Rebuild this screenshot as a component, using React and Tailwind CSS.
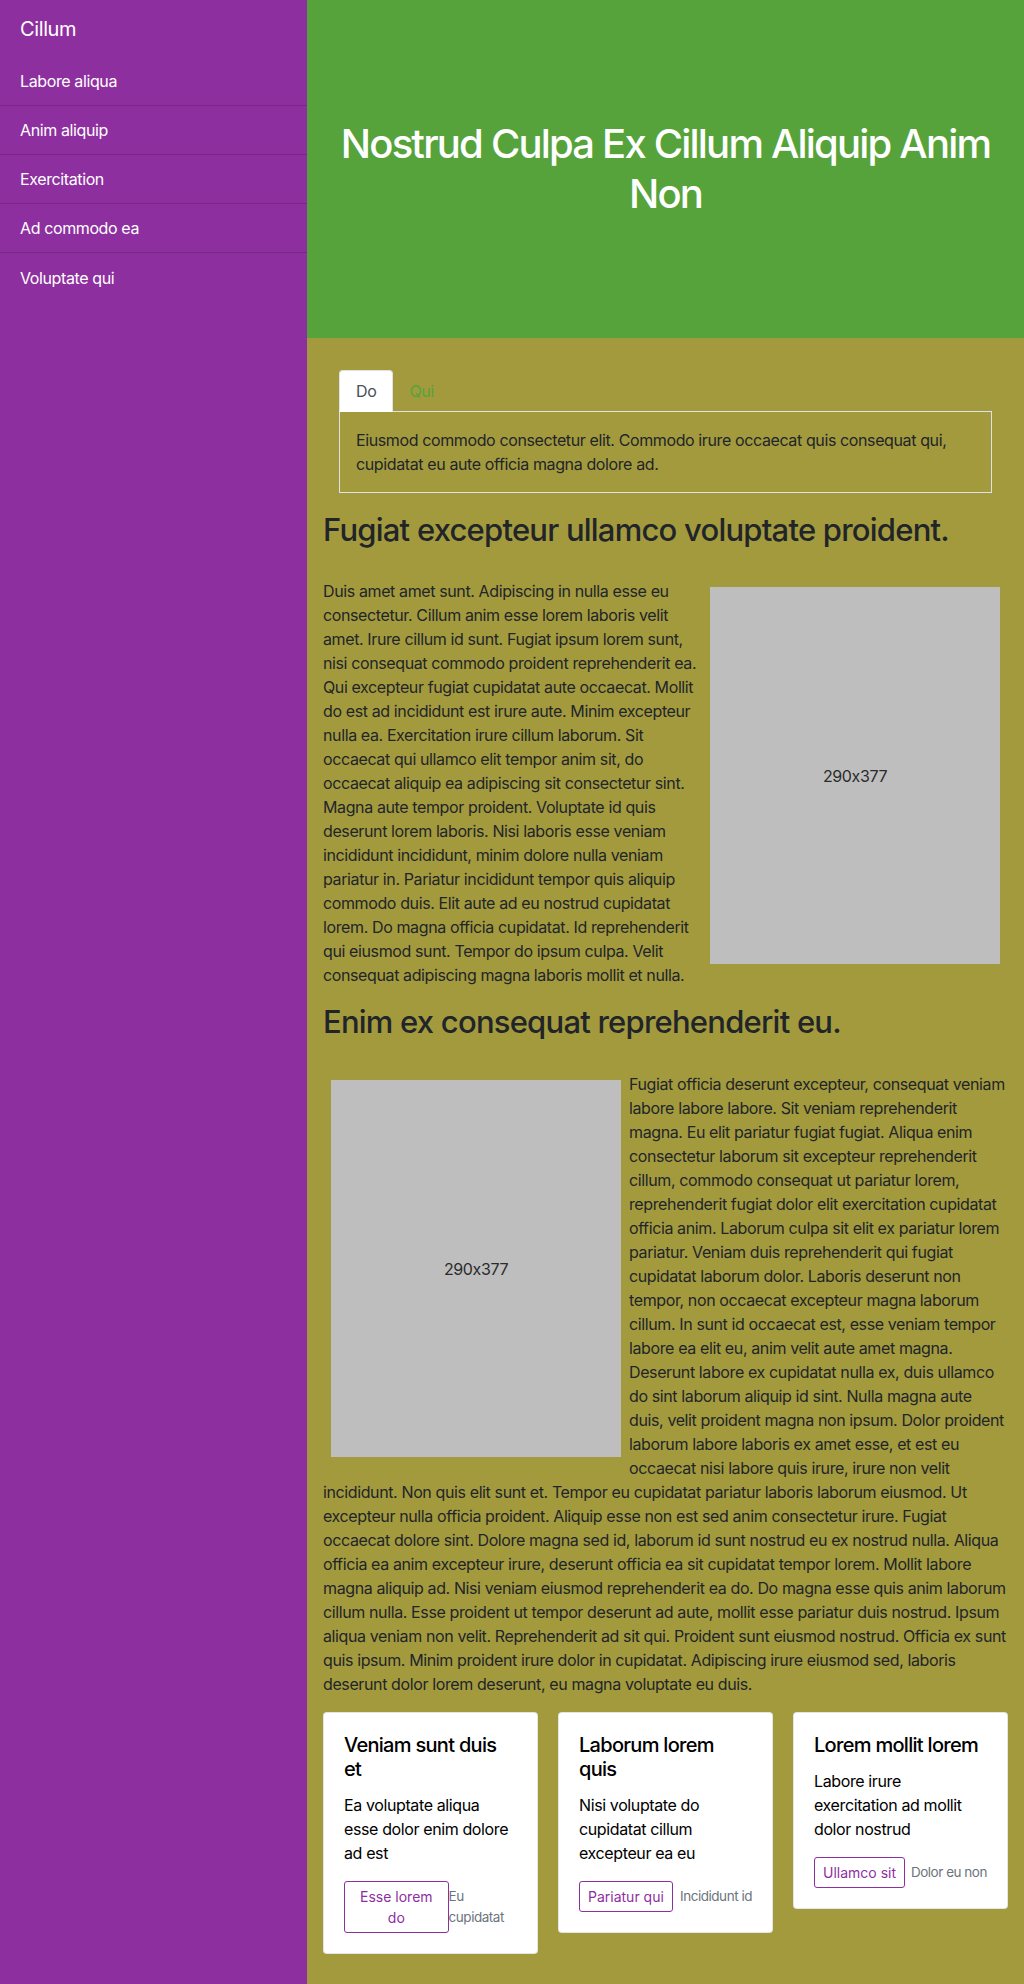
import React from "react";

const navItems = ["Labore aliqua", "Anim aliquip", "Exercitation", "Ad commodo ea", "Voluptate qui"];

const Placeholder = ({ side }) => (
    <div
        className={
            "w-[290px] h-[377px] m-2 bg-[#bebebe] flex items-center justify-center text-[16px] text-[#2b2b2b] " +
            (side === "right" ? "float-right" : "float-left")
        }
    >
        290x377
    </div>
);

const Card = ({ title, text, action, note }) => (
    <div className="flex-1 bg-white border border-black/10 rounded-[4px] p-5 text-black">
        <h5 className="text-[20px] leading-[24px] font-medium tracking-[-0.035em] mb-3">{title}</h5>
        <p className="text-[16px] leading-[24px] mb-4">{text}</p>
        <div className="flex items-center justify-between">
            <button className="border border-[#8e2f9f] text-[#8e2f9f] text-[14px] leading-[21px] px-2 py-1 rounded-[3px] tracking-normal">
                {action}
            </button>
            <small className="text-[13.5px] leading-[21px] text-[#6c757d] tracking-[-0.035em]">{note}</small>
        </div>
    </div>
);

export default function App() {
    return (
        <div className="flex min-h-screen font-['Inter',sans-serif] tracking-[-0.024em]">
            {/* Sidebar */}
            <aside className="w-[307px] shrink-0 bg-[#8e2f9f] text-white">
                <div className="h-[57px] px-5 flex items-center text-[20px]">Cillum</div>
                <nav>
                    {navItems.map((item, i) => (
                        <div
                            key={item}
                            className={
                                "h-[49px] px-5 flex items-center text-[16px] " +
                                (i < navItems.length - 1 ? "border-b border-black/15" : "")
                            }
                        >
                            {item}
                        </div>
                    ))}
                </nav>
            </aside>

            {/* Main */}
            <main className="flex-1 bg-[#a39a3e]">
                <header className="h-[338px] bg-[#56a33b] flex items-center justify-center px-4">
                    <h1 className="text-[40px] leading-[50px] font-medium text-white text-center tracking-[-0.045em]">
                        Nostrud Culpa Ex Cillum Aliquip Anim Non
                    </h1>
                </header>

                <div className="p-4 text-[#212529] text-[16px] leading-[24px]">
                    {/* Tabs */}
                    <div className="p-4">
                        <div className="flex border-b border-[#dee2e6]">
                            <button className="px-4 py-2 bg-white text-[#495057] border border-[#dee2e6] border-b-white rounded-t-[4px] -mb-px">
                                Do
                            </button>
                            <button className="px-4 py-2 text-[#56a33b]">Qui</button>
                        </div>
                        <div className="border border-t-0 border-[#dee2e6] p-4">
                            Eiusmod commodo consectetur elit. Commodo irure occaecat quis consequat qui, cupidatat eu aute officia magna dolore ad.
                        </div>
                    </div>

                    <h2 className="text-[31px] leading-[38px] font-medium tracking-[-0.025em] mt-0.5 mb-[30px]">
                        Fugiat excepteur ullamco voluptate proident.
                    </h2>
                    <div className="flow-root">
                        <Placeholder side="right" />
                        <p className="mb-4">
                            Duis amet amet sunt. Adipiscing in nulla esse eu consectetur. Cillum anim esse lorem laboris velit amet. Irure cillum id sunt. Fugiat ipsum lorem sunt, nisi consequat commodo proident reprehenderit ea. Qui excepteur fugiat cupidatat aute occaecat. Mollit do est ad incididunt est irure aute. Minim excepteur nulla ea. Exercitation irure cillum laborum. Sit occaecat qui ullamco elit tempor anim sit, do occaecat aliquip ea adipiscing sit consectetur sint. Magna aute tempor proident. Voluptate id quis deserunt lorem laboris. Nisi laboris esse veniam incididunt incididunt, minim dolore nulla veniam pariatur in. Pariatur incididunt tempor quis aliquip commodo duis. Elit aute ad eu nostrud cupidatat lorem. Do magna officia cupidatat. Id reprehenderit qui eiusmod sunt. Tempor do ipsum culpa. Velit consequat adipiscing magna laboris mollit et nulla.
                        </p>
                    </div>

                    <h2 className="text-[31px] leading-[38px] font-medium tracking-[-0.025em] mb-[31px]">
                        Enim ex consequat reprehenderit eu.
                    </h2>
                    <div className="flow-root">
                        <Placeholder side="left" />
                        <p className="mb-4">
                            Fugiat officia deserunt excepteur, consequat veniam labore labore labore. Sit veniam reprehenderit magna. Eu elit pariatur fugiat fugiat. Aliqua enim consectetur laborum sit excepteur reprehenderit cillum, commodo consequat ut pariatur lorem, reprehenderit fugiat dolor elit exercitation cupidatat officia anim. Laborum culpa sit elit ex pariatur lorem pariatur. Veniam duis reprehenderit qui fugiat cupidatat laborum dolor. Laboris deserunt non tempor, non occaecat excepteur magna laborum cillum. In sunt id occaecat est, esse veniam tempor labore ea elit eu, anim velit aute amet magna. Deserunt labore ex cupidatat nulla ex, duis ullamco do sint laborum aliquip id sint. Nulla magna aute duis, velit proident magna non ipsum. Dolor proident laborum labore laboris ex amet esse, et est eu occaecat nisi labore quis irure, irure non velit incididunt. Non quis elit sunt et. Tempor eu cupidatat pariatur laboris laborum eiusmod. Ut excepteur nulla officia proident. Aliquip esse non est sed anim consectetur irure. Fugiat occaecat dolore sint. Dolore magna sed id, laborum id sunt nostrud eu ex nostrud nulla. Aliqua officia ea anim excepteur irure, deserunt officia ea sit cupidatat tempor lorem. Mollit labore magna aliquip ad. Nisi veniam eiusmod reprehenderit ea do. Do magna esse quis anim laborum cillum nulla. Esse proident ut tempor deserunt ad aute, mollit esse pariatur duis nostrud. Ipsum aliqua veniam non velit. Reprehenderit ad sit qui. Proident sunt eiusmod nostrud. Officia ex sunt quis ipsum. Minim proident irure dolor in cupidatat. Adipiscing irure eiusmod sed, laboris deserunt dolor lorem deserunt, eu magna voluptate eu duis.
                        </p>
                    </div>

                    {/* Cards */}
                    <div className="flex items-start gap-5">
                        <Card
                            title="Veniam sunt duis et"
                            text="Ea voluptate aliqua esse dolor enim dolore ad est"
                            action="Esse lorem do"
                            note="Eu cupidatat"
                        />
                        <Card
                            title="Laborum lorem quis"
                            text="Nisi voluptate do cupidatat cillum excepteur ea eu"
                            action="Pariatur qui"
                            note="Incididunt id"
                        />
                        <Card
                            title="Lorem mollit lorem"
                            text="Labore irure exercitation ad mollit dolor nostrud"
                            action="Ullamco sit"
                            note="Dolor eu non"
                        />
                    </div>
                </div>
            </main>
        </div>
    );
}
